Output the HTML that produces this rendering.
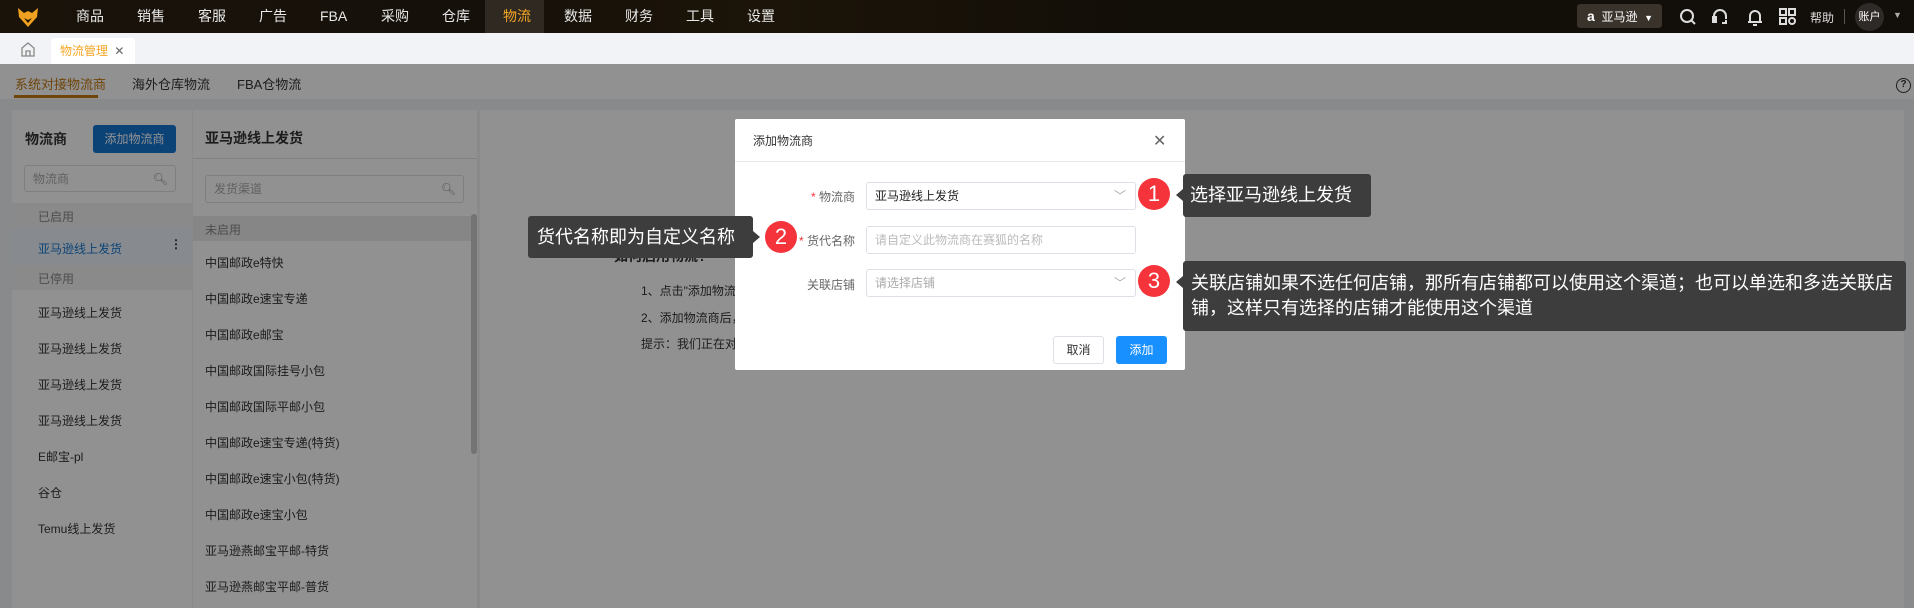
<!DOCTYPE html>
<html><head><meta charset="utf-8"><style>
*{box-sizing:border-box;margin:0;padding:0}
body{width:1914px;height:608px;overflow:hidden;position:relative;background:#f0f2f5;font-family:"Liberation Sans","Noto Sans CJK SC",sans-serif;color:#333;font-size:13px}
.abs{position:absolute}
.top{left:0;top:0;width:1914px;height:33px;background:linear-gradient(90deg,#1a130a 0%,#15100a 25%,#1c1408 40%,#120e08 60%,#120e09 100%)}
.nav{top:0;height:33px;line-height:33px;color:#e8e8e8;font-size:14px}
.tabbar{left:0;top:33px;width:1914px;height:31px;background:#f2f3f7}
.sub{left:0;top:64px;width:1914px;height:35px;background:#fff}
.panel{background:#fff}
.it{position:absolute;font-size:12px;color:#333}
.ov{left:0;top:64px;width:1914px;height:544px;background:rgba(0,0,0,.43)}
.tip{background:#3d3d3d;color:#fff;font-size:18px;border-radius:3px}
.circ{width:32px;height:32px;border-radius:50%;background:#f5333a;color:#fff;font-size:22px;text-align:center;line-height:32px}
.inp{border:1px solid #dcdfe6;border-radius:3px;background:#fff;font-size:12px;line-height:26px;padding-left:8px}
.lbl{font-size:12px;color:#666;width:80px;text-align:right;white-space:nowrap}
</style></head><body>
<div class="abs top"></div>
<svg class="abs" style="left:17px;top:6px" width="22" height="22" viewBox="0 0 22 22"><path d="M1 2 L7 7 L11 5 L15 7 L21 2 L20 11 L11 21 L2 11 Z" fill="#f0a020"/><path d="M7 12 L11 17 L15 12 L11 14 Z" fill="#1a130a"/></svg>
<div class="abs" style="left:485px;top:0;width:59px;height:33px;background:#2f2922"></div>
<div class="abs nav" style="left:76px">商品</div><div class="abs nav" style="left:137px">销售</div><div class="abs nav" style="left:198px">客服</div><div class="abs nav" style="left:259px">广告</div><div class="abs nav" style="left:320px">FBA</div><div class="abs nav" style="left:381px">采购</div><div class="abs nav" style="left:442px">仓库</div><div class="abs nav" style="left:503px;color:#f5a623">物流</div><div class="abs nav" style="left:564px">数据</div><div class="abs nav" style="left:625px">财务</div><div class="abs nav" style="left:686px">工具</div><div class="abs nav" style="left:747px">设置</div>
<div class="abs" style="left:1577px;top:4px;width:85px;height:24px;background:#3a332b;border-radius:3px;color:#fff;font-size:12px;line-height:24px;padding-left:10px"><b style="font-size:14px">a</b>&nbsp; 亚马逊 &nbsp;<span style="font-size:9px">▼</span></div>
<svg class="abs" style="left:1679px;top:8px" width="18" height="18" fill="none" stroke="#ddd" stroke-width="2"><circle cx="8" cy="8" r="6"/><path d="M12.5 12.5 L16 16"/></svg>
<svg class="abs" style="left:1711px;top:7px" width="18" height="20" fill="none" stroke="#ddd" stroke-width="2"><path d="M3 12 V9 a6 6 0 0 1 12 0 V12"/><rect x="2" y="10" width="3" height="5" fill="#ddd"/><path d="M15 13 V16 H11"/></svg>
<svg class="abs" style="left:1746px;top:7px" width="18" height="20" fill="none" stroke="#ddd" stroke-width="2"><path d="M4 15 V9 a5 5 0 0 1 10 0 V15 Z M2 15 H16 M7 18 H11"/></svg>
<svg class="abs" style="left:1779px;top:8px" width="17" height="17" fill="none" stroke="#ddd" stroke-width="2"><rect x="1" y="1" width="6" height="6"/><rect x="10" y="1" width="6" height="6"/><rect x="1" y="10" width="6" height="6"/><circle cx="13" cy="13" r="3"/></svg>
<div class="abs" style="left:1810px;top:9px;color:#ddd;font-size:12px">帮助</div>
<div class="abs" style="left:1844px;top:9px;width:1px;height:15px;background:#555"></div>
<div class="abs" style="left:1855px;top:3px;width:29px;height:28px;border-radius:50%;background:#2e2a27;color:#fff;font-size:11px;line-height:28px;text-align:center">账户</div>
<div class="abs" style="left:1893px;top:10px;color:#aaa;font-size:9px">▼</div>
<div class="abs tabbar"></div>
<svg class="abs" style="left:21px;top:42px" width="14" height="15" fill="none" stroke="#888" stroke-width="1.3"><path d="M1 6 L7 1 L13 6 V14 H1 Z M5 14 V9 H9 V14"/></svg>
<div class="abs" style="left:51px;top:38px;width:84px;height:26px;background:#fff;border-radius:3px 3px 0 0;color:#f5a623;font-size:12px;line-height:26px;padding-left:9px">物流管理 <span style="color:#666;margin-left:3px">✕</span></div>
<div class="abs sub"></div>
<div class="abs" style="left:15px;top:74px;color:#c47a12;font-size:13px">系统对接物流商</div>
<div class="abs" style="left:14px;top:95px;width:84px;height:3px;background:#c47a12"></div>
<div class="abs" style="left:132px;top:74px;font-size:13px">海外仓库物流</div>
<div class="abs" style="left:237px;top:74px;font-size:13px">FBA仓物流</div>
<div class="abs" style="left:1896px;top:78px;width:15px;height:15px;border:1.5px solid #333;border-radius:50%;font-size:10px;line-height:12px;text-align:center;font-weight:bold">?</div>
<div class="abs panel" style="left:12px;top:110px;width:180px;height:498px"></div>
<div class="abs" style="left:25px;top:129px;font-size:14px;font-weight:bold">物流商</div>
<div class="abs" style="left:93px;top:125px;width:83px;height:28px;background:#1677d2;border-radius:3px;color:#fff;font-size:12px;line-height:28px;text-align:center">添加物流商</div>
<div class="abs inp" style="left:24px;top:165px;width:152px;height:27px;color:#aaa">物流商<span style="position:absolute;right:7px;color:#999">🔍︎</span></div>
<div class="abs" style="left:12px;top:203px;width:180px;height:24px;background:#f2f2f2"></div><div class="it" style="left:38px;top:208px;color:#888">已启用</div>
<div class="abs" style="left:12px;top:227px;width:180px;height:38px;background:#eef4fb"></div><div class="it" style="left:38px;top:240px;color:#1677d2">亚马逊线上发货</div><div class="it" style="left:170px;top:237px;font-weight:bold">⋮</div>
<div class="abs" style="left:12px;top:265px;width:180px;height:25px;background:#f2f2f2"></div><div class="it" style="left:38px;top:270px;color:#888">已停用</div>
<div class="it" style="left:38px;top:304px">亚马逊线上发货</div><div class="it" style="left:38px;top:340px">亚马逊线上发货</div><div class="it" style="left:38px;top:376px">亚马逊线上发货</div><div class="it" style="left:38px;top:412px">亚马逊线上发货</div><div class="it" style="left:38px;top:448px">E邮宝-pl</div><div class="it" style="left:38px;top:484px">谷仓</div><div class="it" style="left:38px;top:520px">Temu线上发货</div>
<div class="abs panel" style="left:193px;top:110px;width:284px;height:498px"></div>
<div class="abs" style="left:205px;top:128px;font-size:14px;font-weight:bold">亚马逊线上发货</div>
<div class="abs" style="left:193px;top:158px;width:284px;height:1px;background:#e5e5e5"></div>
<div class="abs inp" style="left:205px;top:175px;width:259px;height:28px;color:#aaa">发货渠道<span style="position:absolute;right:7px;color:#999">🔍︎</span></div>
<div class="abs" style="left:193px;top:216px;width:278px;height:25px;background:#ececec"></div><div class="it" style="left:205px;top:221px;color:#888">未启用</div>
<div class="abs" style="left:471px;top:214px;width:6px;height:240px;background:#ccc;border-radius:3px"></div>
<div class="it" style="left:205px;top:254px">中国邮政e特快</div><div class="it" style="left:205px;top:290px">中国邮政e速宝专递</div><div class="it" style="left:205px;top:326px">中国邮政e邮宝</div><div class="it" style="left:205px;top:362px">中国邮政国际挂号小包</div><div class="it" style="left:205px;top:398px">中国邮政国际平邮小包</div><div class="it" style="left:205px;top:434px">中国邮政e速宝专递(特货)</div><div class="it" style="left:205px;top:470px">中国邮政e速宝小包(特货)</div><div class="it" style="left:205px;top:506px">中国邮政e速宝小包</div><div class="it" style="left:205px;top:542px">亚马逊燕邮宝平邮-特货</div><div class="it" style="left:205px;top:578px">亚马逊燕邮宝平邮-普货</div>
<div class="abs panel" style="left:480px;top:110px;width:1424px;height:498px"></div>
<div class="abs" style="left:614px;top:246px;font-size:14px;font-weight:bold">如何启用物流?</div>
<div class="it" style="left:641px;top:282px">1、点击"添加物流商"</div>
<div class="it" style="left:641px;top:309px">2、添加物流商后，在</div>
<div class="it" style="left:641px;top:335px">提示：我们正在对接</div>
<div class="abs ov"></div>
<div class="abs" style="left:735px;top:119px;width:450px;height:251px;background:#fff;border-radius:2px"></div>
<div class="abs" style="left:753px;top:132px;font-size:12px">添加物流商</div>
<div class="abs" style="left:1153px;top:131px;font-size:16px;color:#666">✕</div>
<div class="abs" style="left:735px;top:161px;width:450px;height:1px;background:#e8e8e8"></div>
<div class="abs lbl" style="left:775px;top:188px"><span style="color:#f5333a">* </span>物流商</div>
<div class="abs inp" style="left:866px;top:182px;width:270px;height:28px;color:#222">亚马逊线上发货<span style="position:absolute;right:9px;color:#aaa">﹀</span></div>
<div class="abs lbl" style="left:775px;top:232px"><span style="color:#f5333a">* </span>货代名称</div>
<div class="abs inp" style="left:866px;top:226px;width:270px;height:28px;color:#bbb">请自定义此物流商在赛狐的名称</div>
<div class="abs lbl" style="left:775px;top:276px">关联店铺</div>
<div class="abs inp" style="left:866px;top:269px;width:270px;height:28px;color:#aaa">请选择店铺<span style="position:absolute;right:9px;color:#aaa">﹀</span></div>
<div class="abs" style="left:1053px;top:336px;width:51px;height:28px;border:1px solid #dcdfe6;border-radius:3px;font-size:12px;line-height:26px;text-align:center">取消</div>
<div class="abs" style="left:1116px;top:336px;width:51px;height:28px;background:#1890ff;border-radius:3px;color:#fff;font-size:12px;line-height:28px;text-align:center">添加</div>
<div class="abs circ" style="left:1138px;top:178px">1</div>
<div class="abs circ" style="left:765px;top:221px">2</div>
<div class="abs circ" style="left:1138px;top:265px">3</div>
<div class="abs tip" style="left:1183px;top:174px;width:188px;height:43px;line-height:43px;padding-left:7px">选择亚马逊线上发货</div>
<div class="abs" style="left:1176px;top:189px;border:6px solid transparent;border-right:7px solid #3d3d3d;border-left:0"></div>
<div class="abs tip" style="left:528px;top:216px;width:225px;height:42px;line-height:42px;padding-left:9px">货代名称即为自定义名称</div>
<div class="abs" style="left:753px;top:231px;border:6px solid transparent;border-left:7px solid #3d3d3d;border-right:0"></div>
<div class="abs tip" style="left:1183px;top:261px;width:723px;height:70px;line-height:25px;padding:10px 8px 0 8px">关联店铺如果不选任何店铺，那所有店铺都可以使用这个渠道；也可以单选和多选关联店铺，这样只有选择的店铺才能使用这个渠道</div>
<div class="abs" style="left:1176px;top:276px;border:6px solid transparent;border-right:7px solid #3d3d3d;border-left:0"></div>
</body></html>
